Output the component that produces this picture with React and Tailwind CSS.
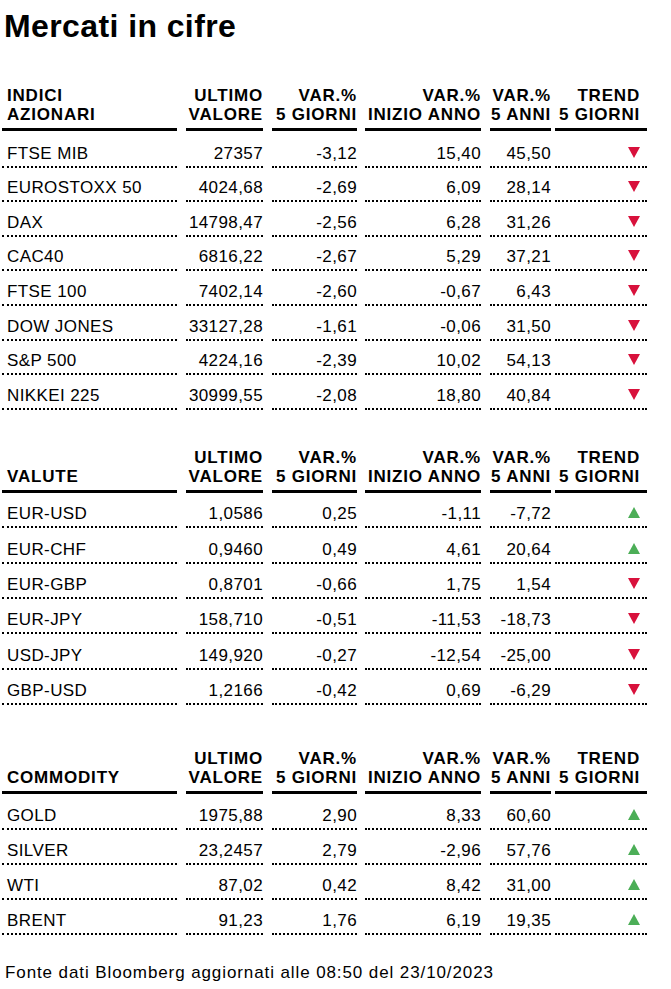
import React from 'react';

const sections = [
  {
    title: ['INDICI', 'AZIONARI'],
    gap: 'mt-[42px]',
    rowH: 'h-[34.6px]',
    headMb: 'mb-[2px]',
    rows: [
      ['FTSE MIB', '27357', '-3,12', '15,40', '45,50', 'down'],
      ['EUROSTOXX 50', '4024,68', '-2,69', '6,09', '28,14', 'down'],
      ['DAX', '14798,47', '-2,56', '6,28', '31,26', 'down'],
      ['CAC40', '6816,22', '-2,67', '5,29', '37,21', 'down'],
      ['FTSE 100', '7402,14', '-2,60', '-0,67', '6,43', 'down'],
      ['DOW JONES', '33127,28', '-1,61', '-0,06', '31,50', 'down'],
      ['S&P 500', '4224,16', '-2,39', '10,02', '54,13', 'down'],
      ['NIKKEI 225', '30999,55', '-2,08', '18,80', '40,84', 'down'],
    ],
  },
  {
    title: ['', 'VALUTE'],
    gap: 'mt-[38px]',
    rowH: 'h-[35.4px]',
    headMb: 'mb-0',
    rows: [
      ['EUR-USD', '1,0586', '0,25', '-1,11', '-7,72', 'up'],
      ['EUR-CHF', '0,9460', '0,49', '4,61', '20,64', 'up'],
      ['EUR-GBP', '0,8701', '-0,66', '1,75', '1,54', 'down'],
      ['EUR-JPY', '158,710', '-0,51', '-11,53', '-18,73', 'down'],
      ['USD-JPY', '149,920', '-0,27', '-12,54', '-25,00', 'down'],
      ['GBP-USD', '1,2166', '-0,42', '0,69', '-6,29', 'down'],
    ],
  },
  {
    title: ['', 'COMMODITY'],
    gap: 'mt-[44px]',
    rowH: 'h-[35px]',
    headMb: 'mb-[1px]',
    rows: [
      ['GOLD', '1975,88', '2,90', '8,33', '60,60', 'up'],
      ['SILVER', '23,2457', '2,79', '-2,96', '57,76', 'up'],
      ['WTI', '87,02', '0,42', '8,42', '31,00', 'up'],
      ['BRENT', '91,23', '1,76', '6,19', '19,35', 'up'],
    ],
  },
];

// column boxes measured off the underline segments
const cols = [
  'ml-[2px] w-[175px] text-left pl-[5px]',
  'ml-[9px] w-[77px] text-right',
  'ml-[9px] w-[85px] text-right',
  'ml-[8px] w-[116px] text-right',
  'ml-[9px] w-[61px] text-right',
  'ml-[4px] w-[92px] text-right pr-[7px]',
];

const heads = [
  null,
  ['ULTIMO', 'VALORE'],
  ['VAR.%', '5 GIORNI'],
  ['VAR.%', 'INIZIO ANNO'],
  ['VAR.%', '5 ANNI'],
  ['TREND', '5 GIORNI'],
];

const Triangle = ({ dir }) => (
  <svg width="12" height="11" viewBox="0 0 12 11" className="mt-[3px] ml-auto block">
    {dir === 'up' ? (
      <polygon points="6,0 12,11 0,11" fill="#4cae57" />
    ) : (
      <polygon points="0,0 12,0 6,11" fill="#d8113c" />
    )}
  </svg>
);

const Section = ({ sec }) => (
  <div className={sec.gap}>
    <div className={`flex ${sec.headMb}`}>
      {cols.map((c, i) => {
        const lines = i === 0 ? sec.title : heads[i];
        return (
          <div
            key={i}
            className={`${c} border-b-[3px] border-black pb-[4px] text-[17px] leading-[19px] font-bold tracking-[0.8px]`}
          >
            <div className="h-[19px] whitespace-nowrap">{lines[0]}</div>
            <div className="h-[19px] whitespace-nowrap">{lines[1]}</div>
          </div>
        );
      })}
    </div>
    {sec.rows.map((r, ri) => (
      <div key={ri} className={`flex items-end ${sec.rowH}`}>
        {cols.map((c, i) => (
          <div
            key={i}
            className={`${c} border-b-2 border-dotted border-black pb-[5px] h-[24px] text-[17px] leading-[19px] tracking-[0.4px] whitespace-nowrap`}
          >
            {i === 5 ? <Triangle dir={r[5]} /> : r[i]}
          </div>
        ))}
      </div>
    ))}
  </div>
);

const App = () => {
  return (
    <div className="w-[671px] h-[989px] bg-white text-black font-['Liberation_Sans',Arial,sans-serif] pt-[8px] overflow-hidden">
      <h1 className="pl-[4px] text-[32px] leading-[36px] font-bold tracking-[0.4px]">Mercati in cifre</h1>
      {sections.map((s, i) => (
        <Section key={i} sec={s} />
      ))}
      <p className="mt-[28px] pl-[5px] text-[17px] leading-[20px] tracking-[0.9px]">
        Fonte dati Bloomberg aggiornati alle 08:50 del 23/10/2023
      </p>
    </div>
  );
};

export default App;
